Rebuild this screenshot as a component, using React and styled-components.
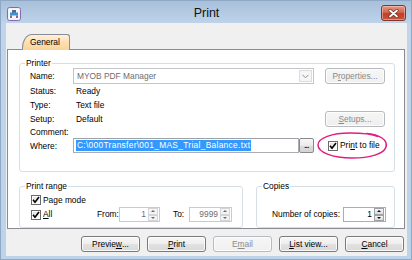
import React from 'react';
import styled, { createGlobalStyle } from 'styled-components';

const FONT = `"Liberation Sans", Arial, sans-serif`;

const GlobalStyle = createGlobalStyle`
  html, body { margin: 0; padding: 0; background: #fff; }
  body { font-family: ${FONT}; }
  #root { width: 412px; height: 260px; }
`;

const Window = styled.div`
  position: relative;
  box-sizing: border-box;
  width: 412px;
  height: 260px;
  display: flex;
  flex-direction: column;
  border: 1px solid #8fa8c6;
  background: linear-gradient(#a9c0da 0px, #b6cce5 14px, #c0d5eb 24px, #bdd3ea 100%);
  font-family: ${FONT};
  font-size: 8.4px;
  color: #000;
`;

const TitleBar = styled.div`
  height: 22px;
  display: grid;
  grid-template-columns: 1fr auto 1fr;
  align-items: start;
  padding: 0 5px 0 6px;
`;

const AppIcon = styled.svg`
  margin-top: 6px;
  display: block;
`;

const Title = styled.div`
  font-size: 12.5px;
  line-height: 14px;
  margin-top: 5px;
  color: #111;
`;

const CloseButton = styled.div`
  justify-self: end;
  margin-top: 4px;
  width: 25px;
  height: 16px;
  box-sizing: border-box;
  border: 1px solid #7d3a2e;
  border-radius: 3px;
  background: linear-gradient(#e59a88, #d2654f 45%, #bf3e28 55%, #c9573d);
  box-shadow: inset 0 0 0 1px rgba(255, 220, 210, 0.45);
  display: flex;
  align-items: center;
  justify-content: center;
`;

const Client = styled.div`
  flex: 1;
  margin: 0 4px 3px 5px;
  background: #f0f0f0;
  display: flex;
  flex-direction: column;
`;

const TabControl = styled.div`
  margin: 0 2px 0 1px;
  display: flex;
  flex-direction: column;
`;

const TabStrip = styled.div`
  height: 26px;
  box-sizing: border-box;
  display: flex;
  align-items: flex-end;
  padding-left: 15px;
`;

const Tab = styled.div`
  position: relative;
  z-index: 1;
  height: 16px;
  margin-bottom: -1px;
  box-sizing: border-box;
  border: 1px solid #898c95;
  border-bottom: none;
  border-radius: 10px 3px 0 0 / 14px 3px 0 0;
  background: linear-gradient(#fdf1dc, #fcdeae 55%, #fad49a);
  padding: 0 9px 0 7px;
  display: flex;
  align-items: center;
  line-height: 11px;
`;

const Panel = styled.div`
  height: 180px;
  box-sizing: border-box;
  border: 1px solid #898c95;
  background: #fff;
  padding: 13px 9px 0 11px;
  display: flex;
  flex-direction: column;
`;

const Group = styled.div`
  position: relative;
  box-sizing: border-box;
  border: 1px solid #d5dfe5;
  border-radius: 3px;
  height: ${(p) => p.$h}px;
  width: ${(p) => (p.$w ? `${p.$w}px` : 'auto')};
  flex: ${(p) => (p.$w ? 'none' : '1')};
  padding: ${(p) => p.$pad};
`;

const GroupLabel = styled.span`
  position: absolute;
  top: -6px;
  left: 5px;
  padding: 0 1px;
  background: #fff;
  line-height: 11px;
`;

const PrinterGrid = styled.div`
  display: grid;
  grid-template-columns: 32px 241px 60px;
  column-gap: 11px;
  grid-template-rows: 16px 15px 13px 14px 12px 17px;
  align-items: center;
  line-height: 11px;
`;

const Label = styled.span`
  white-space: nowrap;
`;

const Value = styled.span`
  padding-left: 3px;
  white-space: nowrap;
`;

const Combo = styled.div`
  box-sizing: border-box;
  height: 16px;
  display: flex;
  align-items: stretch;
  border: 1px solid #c2c5ca;
  background: #fff;
  color: #6d6d6d;
`;

const ComboText = styled.span`
  flex: 1;
  padding-left: 3px;
  display: flex;
  align-items: center;
`;

const ComboArrow = styled.span`
  width: 13px;
  margin: 1px;
  box-sizing: border-box;
  border: 1px solid #dadce0;
  background: #f6f6f6;
  display: flex;
  align-items: center;
  justify-content: center;
`;

const Button = styled.button`
  box-sizing: border-box;
  width: ${(p) => p.$w}px;
  height: 16px;
  padding: 0;
  margin: 0;
  font-family: ${FONT};
  font-size: 8.4px;
  line-height: 11px;
  color: ${(p) => (p.disabled ? '#8a8a8a' : '#000')};
  border: 1px solid ${(p) => (p.disabled ? '#b7babe' : '#7a7a7a')};
  border-radius: 3px;
  background: ${(p) =>
    p.disabled
      ? 'linear-gradient(#f6f6f6, #efefef)'
      : 'linear-gradient(#f7f7f7, #eeeeee 50%, #e2e2e2 50%, #d9d9d9)'};
  box-shadow: inset 0 0 0 1px rgba(255, 255, 255, 0.8);
  display: flex;
  align-items: center;
  justify-content: center;
`;

const WhereField = styled.div`
  align-self: start;
  height: 15px;
  display: flex;
`;

const PathInput = styled.div`
  flex: 1;
  box-sizing: border-box;
  border: 1px solid #abadb3;
  border-top-color: #9ea1a8;
  background: #fff;
  display: flex;
  align-items: center;
  padding-left: 2px;
  overflow: hidden;
`;

const Selected = styled.span`
  background: #3399ff;
  color: #fff;
  line-height: 11px;
  padding: 0 1px;
  letter-spacing: 0.3px;
  white-space: nowrap;
`;

const BrowseButton = styled.span`
  width: 15px;
  flex: none;
  box-sizing: border-box;
  border: 1px solid #8a8a8a;
  border-radius: 2px;
  background: linear-gradient(#f7f7f7, #eaeaea 50%, #dcdcdc 50%, #d4d4d4);
  display: flex;
  align-items: center;
  justify-content: center;
  font-weight: bold;
  font-size: 7px;
  letter-spacing: -0.5px;
  line-height: 7px;
`;

const CheckRow = styled.label`
  display: flex;
  align-items: center;
  gap: ${(p) => p.$gap ?? 2}px;
  padding-left: ${(p) => p.$pl ?? 0}px;
  width: ${(p) => (p.$w ? `${p.$w}px` : 'auto')};
  flex: none;
  white-space: nowrap;
  line-height: 11px;
  height: ${(p) => p.$h ?? 14}px;
  align-self: ${(p) => p.$self ?? 'auto'};
`;

const Box = styled.span`
  width: 10px;
  height: 10px;
  box-sizing: border-box;
  border: 1px solid #6b6b6b;
  background: linear-gradient(135deg, #dedede, #ffffff);
  box-shadow: inset 0 0 0 1px #fff;
  display: flex;
  align-items: center;
  justify-content: center;
  flex: none;
`;

const Bottom = styled.div`
  display: flex;
  gap: 13px;
  margin-top: 14px;
`;

const Row = styled.div`
  display: flex;
  align-items: center;
  height: ${(p) => p.$h}px;
  line-height: 11px;
  white-space: nowrap;
`;

const FieldLabel = styled.span`
  width: ${(p) => p.$w}px;
  margin-left: ${(p) => p.$ml ?? 0}px;
  flex: none;
`;

const SpinBox = styled.div`
  box-sizing: border-box;
  width: ${(p) => p.$w}px;
  height: 15px;
  margin-left: ${(p) => p.$ml ?? 0}px;
  border: 1px solid ${(p) => (p.$disabled ? '#c9cbcf' : '#abadb3')};
  background: #fff;
  display: flex;
  flex: none;
`;

const SpinValue = styled.span`
  flex: 1;
  text-align: right;
  padding-right: 2px;
  line-height: 13px;
  color: ${(p) => (p.$disabled ? '#6d6d6d' : '#000')};
`;

const SpinButtons = styled.span`
  width: 10px;
  display: flex;
  flex-direction: column;
  padding: 0 1px 0 0;
`;

const SpinBtn = styled.span`
  flex: 1;
  box-sizing: border-box;
  border: 1px solid ${(p) => (p.$disabled ? '#d3d5d8' : '#9fa2a7')};
  background: ${(p) =>
    p.$disabled ? '#f4f4f4' : 'linear-gradient(#f6f6f6, #dcdcdc)'};
  display: flex;
  align-items: center;
  justify-content: center;
`;

const Arrow = styled.span`
  width: 0;
  height: 0;
  border-left: 2px solid transparent;
  border-right: 2px solid transparent;
  ${(p) =>
    p.$up
      ? `border-bottom: 2px solid ${p.$disabled ? '#6a6a6a' : '#111'};`
      : `border-top: 2px solid ${p.$disabled ? '#6a6a6a' : '#111'};`}
`;

const ButtonRow = styled.div`
  display: flex;
  justify-content: flex-end;
  gap: 7px;
  margin: 7px 3px 0 0;
`;

const Annotation = styled.svg`
  position: absolute;
  left: -1px;
  top: -1px;
  width: 412px;
  height: 260px;
  pointer-events: none;
`;

const Check = () => (
  <Box>
    <svg width="8" height="8" viewBox="0 0 8 8">
      <path d="M1 3.8 L3 6.3 L7 1" stroke="#000" strokeWidth="1.6" fill="none" />
    </svg>
  </Box>
);

const Spin = ({ value, w, ml, disabled }) => (
  <SpinBox $w={w} $ml={ml} $disabled={disabled}>
    <SpinValue $disabled={disabled}>{value}</SpinValue>
    <SpinButtons>
      <SpinBtn $disabled={disabled}>
        <Arrow $up $disabled={disabled} />
      </SpinBtn>
      <SpinBtn $disabled={disabled}>
        <Arrow $disabled={disabled} />
      </SpinBtn>
    </SpinButtons>
  </SpinBox>
);

export default function App() {
  return (
    <>
      <GlobalStyle />
      <Window>
        <TitleBar>
          <AppIcon width="14" height="14" viewBox="0 0 14 14">
            <rect x="0.5" y="0.5" width="13" height="13" rx="2" fill="#efe8f6" stroke="#8868b0" />
            <rect x="1.5" y="1.5" width="11" height="11" rx="1" fill="#f9f6fc" />
            <rect x="5" y="3" width="4" height="3" fill="#5d6b7c" />
            <rect x="3" y="5.5" width="8" height="3" fill="#3d8fd6" />
            <rect x="3" y="8.5" width="2" height="2.5" fill="#6b7686" />
            <rect x="9" y="8.5" width="2" height="2.5" fill="#6b7686" />
          </AppIcon>
          <Title>Print</Title>
          <CloseButton>
            <svg width="11" height="9" viewBox="0 0 11 9">
              <path d="M2 1.5 L9 7.5 M9 1.5 L2 7.5" stroke="#6b2b20" strokeWidth="3.2" strokeLinecap="round" />
              <path d="M2 1.5 L9 7.5 M9 1.5 L2 7.5" stroke="#fff" strokeWidth="1.8" strokeLinecap="round" />
            </svg>
          </CloseButton>
        </TitleBar>

        <Client>
          <TabControl>
            <TabStrip>
              <Tab>General</Tab>
            </TabStrip>
            <Panel>
              <Group $h={98} $pad="4px 9px 0 10px">
                <GroupLabel>Printer</GroupLabel>
                <PrinterGrid>
                  <Label>Name:</Label>
                  <Combo>
                    <ComboText>MYOB PDF Manager</ComboText>
                    <ComboArrow>
                      <svg width="7" height="5" viewBox="0 0 7 5">
                        <path d="M0.5 0.8 L3.5 3.8 L6.5 0.8" stroke="#8c8c8c" strokeWidth="1" fill="none" />
                      </svg>
                    </ComboArrow>
                  </Combo>
                  <Button $w={60} disabled>
                    P<u>r</u>operties...
                  </Button>

                  <Label>Status:</Label>
                  <Value>Ready</Value>
                  <span />

                  <Label>Type:</Label>
                  <Value>Text file</Value>
                  <span />

                  <Label>Setup:</Label>
                  <Value>Default</Value>
                  <Button $w={60} disabled>
                    <u>S</u>etups...
                  </Button>

                  <Label>Comment:</Label>
                  <span />
                  <span />

                  <Label>Where:</Label>
                  <WhereField>
                    <PathInput>
                      <Selected>C:\000Transfer\001_MAS_Trial_Balance.txt</Selected>
                    </PathInput>
                    <BrowseButton>...</BrowseButton>
                  </WhereField>
                  <CheckRow $pl={3} $gap={2} $h={15} $self="start">
                    <Check />
                    <span>
                      Pri<u>n</u>t to file
                    </span>
                  </CheckRow>
                </PrinterGrid>
              </Group>

              <Bottom>
                <Group $h={42} $w={224} $pad="6px 0 0 11px">
                  <GroupLabel>Print range</GroupLabel>
                  <CheckRow $h={14}>
                    <Check />
                    <span>Page mode</span>
                  </CheckRow>
                  <Row $h={15}>
                    <CheckRow $h={15} $w={66}>
                      <Check />
                      <span>
                        <u>A</u>ll
                      </span>
                    </CheckRow>
                    <FieldLabel $w={22}>From:</FieldLabel>
                    <Spin value="1" w={41} disabled />
                    <FieldLabel $w={14} $ml={13}>
                      To:
                    </FieldLabel>
                    <Spin value="9999" w={43} ml={2} disabled />
                  </Row>
                </Group>
                <Group $h={42} $pad="20px 0 0 15px">
                  <GroupLabel>Copies</GroupLabel>
                  <Row $h={15}>
                    <FieldLabel $w={71}>Number of copies:</FieldLabel>
                    <Spin value="1" w={43} />
                  </Row>
                </Group>
              </Bottom>
            </Panel>
          </TabControl>

          <ButtonRow>
            <Button $w={59}>
              Previe<u>w</u>...
            </Button>
            <Button $w={59}>
              <u>P</u>rint
            </Button>
            <Button $w={59} disabled>
              E<u>m</u>ail
            </Button>
            <Button $w={59}>
              <u>L</u>ist view...
            </Button>
            <Button $w={59}>
              <u>C</u>ancel
            </Button>
          </ButtonRow>
        </Client>

        <Annotation viewBox="0 0 412 260">
          <path
            d="M366 133.5 C380 134.5 388 140 386 147 C384 154 370 158 352 158 C332 158 318 152 318 145 C318 138 332 133 350 133 C362 133 372 134 378 136.5"
            stroke="#e01f82"
            strokeWidth="1.5"
            fill="none"
          />
        </Annotation>
      </Window>
    </>
  );
}
